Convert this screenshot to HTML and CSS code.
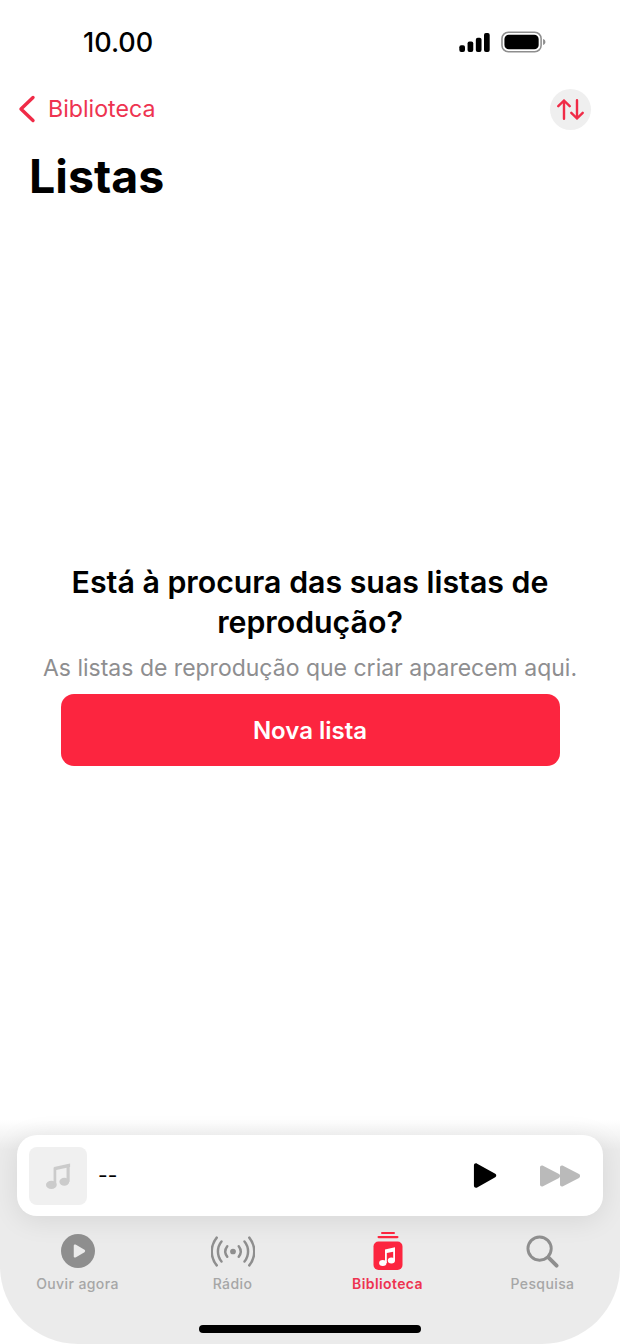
FILE: index.html
```html
<!DOCTYPE html>
<html lang="pt">
<head>
  <meta charset="UTF-8" />
  <meta name="viewport" content="width=device-width, initial-scale=1.0" />
  <title>Listas</title>
  <link rel="stylesheet" href="styles.css">
</head>
<body>
  <div class="phone">
    <div class="status-bar">
      <span class="time">10.00</span>
      <div class="status-icons">
        <svg width="31" height="19" viewBox="0 0 32 20" fill="#000">
          <rect x="0" y="13" width="6" height="7" rx="2"/>
          <rect x="8.700" y="9" width="6" height="11" rx="2"/>
          <rect x="17.400" y="5" width="6" height="15" rx="2"/>
          <rect x="26" y="0" width="6" height="20" rx="2"/>
        </svg>
        <svg width="45" height="22" viewBox="0 0 46 22">
          <rect x="1" y="1" width="40" height="20" rx="6.500" fill="none" stroke="#8e8e8e" stroke-width="1.600"/>
          <rect x="3.500" y="3.500" width="35" height="15" rx="4.500" fill="#000"/>
          <path d="M43 8c1.600.4 2.400 1.500 2.400 3s-.8 2.600-2.400 3z" fill="#8e8e8e"/>
        </svg>
      </div>
    </div>

    <div class="nav-bar">
      <div class="back">
        <svg width="18" height="28" viewBox="0 0 18 28" fill="none" stroke="#f02b47" stroke-width="3.400" stroke-linecap="round" stroke-linejoin="round">
          <path d="M15 2.500 3 14l12 11.500"/>
        </svg>
        <span>Biblioteca</span>
      </div>
      <div class="sort-btn">
        <svg width="27" height="21" viewBox="0 0 27 21" fill="none" stroke="#f02b47" stroke-width="2.400" stroke-linecap="round" stroke-linejoin="round">
          <path d="M7 19.800V1.500M1.300 7.200 7 1.500l5.700 5.700"/>
          <path d="M20 1.200v18.300M14.300 13.800l5.700 5.700 5.700-5.700"/>
        </svg>
      </div>
    </div>

    <h1 class="title">Listas</h1>

    <main class="empty">
      <h2>Está à procura das suas listas de reprodução?</h2>
      <p>As listas de reprodução que criar aparecem aqui.</p>
      <button type="button">Nova lista</button>
    </main>

    <div class="dock">
      <div class="player">
        <div class="artwork">
          <svg width="25" height="27" viewBox="0 0 28 30" fill="#cbcbcb">
            <ellipse cx="6" cy="25.500" rx="6" ry="4.500"/>
            <ellipse cx="20.500" cy="22" rx="5.500" ry="4.500"/>
            <path d="M9 5.500 27 1.500v4L9 9.500z"/>
            <path d="M23 3h3.500v19H23zM8.500 6h3v20h-3z"/>
          </svg>
        </div>
        <span class="track">--</span>
        <svg class="play" width="24" height="27" viewBox="0 0 26 28" fill="#000">
          <path d="M1 3.200C1 1.200 2.800.2 4.500 1.200l19.600 11c1.500.9 1.500 2.800 0 3.700l-19.600 11C2.800 27.800 1 26.800 1 24.800z"/>
        </svg>
        <svg class="next" width="40" height="22" viewBox="0 0 40 22" fill="#bababa">
          <path d="M0 2.500C0 .8 1.600 0 3 .8l16 8.300c1.400.8 1.400 3 0 3.800L3 21.200C1.600 22 0 21.200 0 19.500z"/>
          <path d="M20 2.500c0-1.700 1.600-2.500 3-1.700l16 8.300c1.400.8 1.400 3 0 3.800l-16 8.300c-1.400.8-3 0-3-1.700z"/>
        </svg>
      </div>

      <nav class="tabs">
        <div class="tab">
          <div class="tab-icon">
            <svg width="34" height="34" viewBox="0 0 36 36">
              <circle cx="18" cy="18" r="18" fill="#8e8e8e"/>
              <path d="M13.500 12.300c0-1 1-1.600 1.900-1.100l9.500 5.600c.9.500.9 1.900 0 2.400l-9.500 5.600c-.9.500-1.900-.1-1.900-1.100z" fill="#ebebeb"/>
            </svg>
          </div>
          <span>Ouvir agora</span>
        </div>
        <div class="tab">
          <div class="tab-icon">
            <svg width="44" height="31" viewBox="0 0 46 32" fill="none" stroke="#8e8e8e" stroke-width="2.600" stroke-linecap="round">
              <circle cx="23" cy="16" r="3" fill="#8e8e8e" stroke="none"/>
              <path d="M17 10.500c-2.500 3.300-2.500 7.700 0 11M29 10.500c2.500 3.300 2.500 7.700 0 11"/>
              <path d="M11 5.500c-5 6-5 15 0 21M35 5.500c5 6 5 15 0 21"/>
              <path d="M6 1.500c-7 8.500-7 20.500 0 29M40 1.500c7 8.500 7 20.500 0 29"/>
            </svg>
          </div>
          <span>Rádio</span>
        </div>
        <div class="tab active">
          <div class="tab-icon">
            <svg width="30" height="38" viewBox="0 0 30 38">
              <rect x="8" y="0" width="14" height="2" rx="1" fill="#fc253f"/>
              <rect x="4.500" y="4" width="21" height="2.200" rx="1.100" fill="#fc253f"/>
              <rect x="0.500" y="9.500" width="29" height="28.500" rx="5" fill="#fc253f"/>
              <path d="M12 17.500l10-2.200v13.200h-1.800v-8.800l-6.400 1.400V31H12z" fill="#fff"/>
              <ellipse cx="9.800" cy="31" rx="3.700" ry="3" fill="#fff"/>
              <ellipse cx="18.400" cy="28.500" rx="3.600" ry="3" fill="#fff"/>
            </svg>
          </div>
          <span>Biblioteca</span>
        </div>
        <div class="tab">
          <div class="tab-icon">
            <svg width="33" height="33" viewBox="0 0 34 34" fill="none" stroke="#8e8e8e" stroke-linecap="round">
              <circle cx="14" cy="14" r="12" stroke-width="3"/>
              <path d="M23 23l8.500 8.500" stroke-width="4"/>
            </svg>
          </div>
          <span>Pesquisa</span>
        </div>
      </nav>

      <div class="home-bar"></div>
    </div>
  </div>
</body>
</html>
```

FILE: styles.css
```css
* {
  box-sizing: border-box;
}
body {
  margin: 0;
  background: #fff;
  font-family: Inter, "Liberation Sans", sans-serif;
}
.phone {
  width: 620px;
  height: 1344px;
  display: flex;
  flex-direction: column;
  overflow: hidden;
}
.status-bar {
  height: 84px;
  flex: none;
  display: flex;
  justify-content: space-between;
  align-items: center;
  padding: 0 74px 0 83px;
}
.time {
  font-size: 27px;
  font-weight: 500;
  color: #000;
}
.status-icons {
  display: flex;
  align-items: center;
  gap: 11px;
}
.nav-bar {
  height: 50px;
  flex: none;
  display: flex;
  justify-content: space-between;
  align-items: center;
  padding: 0 29px 0 18px;
}
.back {
  display: flex;
  align-items: center;
  gap: 12px;
  color: #ee3350;
  font-size: 23.200px;
}
.sort-btn {
  width: 41px;
  height: 41px;
  border-radius: 50%;
  background: #efefef;
  display: flex;
  justify-content: center;
  align-items: center;
}
.title {
  flex: none;
  margin: 14px 0 0;
  padding-left: 29px;
  font-size: 46.500px;
  line-height: 56px;
  font-weight: 700;
  color: #000;
}
.empty {
  flex: 1;
  display: flex;
  flex-direction: column;
  align-items: center;
  padding-top: 358px;
  text-align: center;
}
.empty h2 {
  margin: 0;
  width: 500px;
  font-size: 30.300px;
  line-height: 40px;
  font-weight: 600;
  color: #000;
}
.empty p {
  margin: 9px 0 0;
  font-size: 23px;
  line-height: 34px;
  color: #8e8e90;
  white-space: nowrap;
}
.empty button {
  width: 499px;
  height: 72px;
  margin-top: 9px;
  border: none;
  border-radius: 13px;
  background: #fc253f;
  color: #fff;
  font-family: inherit;
  font-size: 24px;
  font-weight: 600;
}
.dock {
  flex: none;
  height: 224px;
  padding: 15px 17px 0;
  background: linear-gradient(#fff, #ebebeb 30px);
  border-radius: 0 0 78px 78px;
  display: flex;
  flex-direction: column;
}
.player {
  height: 81px;
  flex: none;
  display: flex;
  align-items: center;
  padding: 0 23px 0 12px;
  background: #fff;
  border-radius: 20px;
  box-shadow: 0 4px 28px rgba(0,0,0,0.09);
}
.artwork {
  width: 58px;
  height: 58px;
  border-radius: 8px;
  background: #f0f0f0;
  display: flex;
  justify-content: center;
  align-items: center;
}
.track {
  flex: 1;
  margin-left: 11px;
  font-size: 21px;
  color: #000;
}
.play {
  margin-right: 43px;
}
.tabs {
  flex: none;
  margin: 15px -17px 0;
  display: grid;
  grid-template-columns: repeat(4, 155px);
}
.tab {
  display: flex;
  flex-direction: column;
  align-items: center;
  gap: 4px;
  font-size: 14px;
  line-height: 18px;
  font-weight: 500;
  letter-spacing: 0.4px;
  color: #a6a6a6;
}
.tab-icon {
  height: 40px;
  display: flex;
  align-items: center;
}
.tab.active {
  color: #ee3350;
  font-weight: 600;
}
.home-bar {
  width: 222px;
  height: 8px;
  flex: none;
  margin: 32px auto 0;
  border-radius: 4px;
  background: #000;
}
```
